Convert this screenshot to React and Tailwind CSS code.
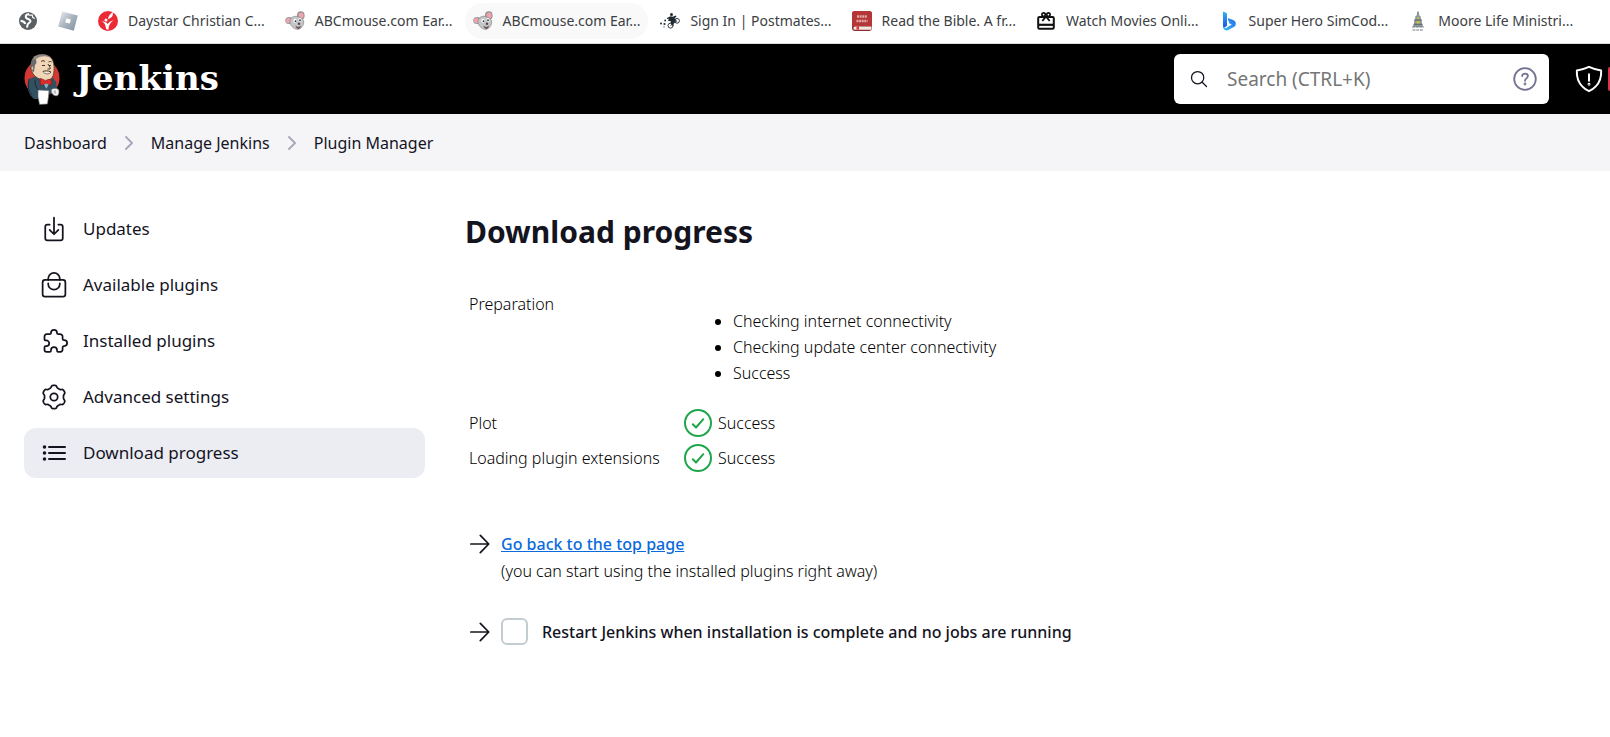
import React from "react";
import { IoSearchOutline, IoDownloadOutline } from "react-icons/io5";

function GlobeIcon() {
  return (
    <svg viewBox="0 0 20 20" className="size-5 shrink-0" aria-hidden="true">
      <circle cx="10" cy="10" r="9" fill="#5a5f64" />
      <path d="M11 3C8.500 3.200 7.600 4.500 7.800 6c.3 2.600 4.400 1.500 4.700 4 .1 1.800-2.600 1.800-3.200 4.600l-.2 2" fill="none" stroke="#fff" strokeWidth="2" />
      <path d="M2.600 9.800c2 .2 4.200.8 4.600 3.200" fill="none" stroke="#fff" strokeWidth="2.200" />
      <path d="M10.500 4.200h3.700l.6 2.300 2 1" fill="none" stroke="#fff" strokeWidth="1.200" />
    </svg>
  );
}

function BlockIcon() {
  return (
    <svg viewBox="0 0 20 20" className="size-5 shrink-0" aria-hidden="true">
      <defs>
        <linearGradient id="block" x1="0" y1="0" x2="1" y2="1">
          <stop offset="0" stopColor="#eef0f2" />
          <stop offset=".5" stopColor="#a9b4bf" />
          <stop offset="1" stopColor="#7f8fa0" />
        </linearGradient>
      </defs>
      <path d="M4.200.4 19.800 4.600 15.800 19.800.2 15.600Z" fill="url(#block)" />
      <path d="M8.300 7.200 12.800 8.400 11.700 12.600 7.300 11.500Z" fill="#fff" />
    </svg>
  );
}

function DaystarIcon() {
  return (
    <svg viewBox="0 0 20 20" className="size-5 shrink-0" aria-hidden="true">
      <circle cx="10" cy="10" r="10" fill="#ec2a35" />
      <path d="M3.500 10.500c2.600.6 4.200 3.200 4.600 7.500l2.400 1c.2-4.400 1.500-7.600 5.500-9.800-2.600.3-4.800 1.500-6.300 3.900-1.200-2-3.300-3-6.200-2.600Z" fill="#fff" />
      <circle cx="8" cy="9" r="1.500" fill="#fff" />
      <path d="M10 8c.3-3 2.500-5.800 5.700-7.200-.8 1.300-1 2-.8 3.200C14 6 12.500 7.500 10 8Z" fill="#fff" />
    </svg>
  );
}

function MouseIcon() {
  return (
    <svg viewBox="0 0 20 20" className="size-5 shrink-0" aria-hidden="true">
      <ellipse cx="4.200" cy="9.500" rx="4" ry="3.600" fill="#9a9a9c" />
      <ellipse cx="3.700" cy="9.500" rx="2.800" ry="2.600" fill="#f0a3ad" />
      <ellipse cx="15.800" cy="4.600" rx="3.800" ry="4.300" fill="#8f8f92" />
      <ellipse cx="16" cy="4.600" rx="2.600" ry="3.200" fill="#f0a3ad" />
      <path d="M5 10c.5-3.500 4-5.500 7.500-4.500 3 .9 5.500 2.500 6.200 4.500.4 3-1.200 6-3.700 7.700-2.300 1.300-5 .6-7-1.200C5.800 14.800 4.600 12.500 5 10Z" fill="#c4c5c8" stroke="#77787b" strokeWidth=".6" />
      <ellipse cx="10" cy="9.800" rx="1.700" ry="2" fill="#fff" />
      <ellipse cx="15" cy="8.800" rx="1.500" ry="1.900" fill="#fff" />
      <circle cx="10.500" cy="10.200" r=".9" fill="#333" />
      <circle cx="15" cy="9.200" r=".9" fill="#333" />
      <circle cx="14" cy="12.700" r="1.200" fill="#5b4547" />
      <path d="M10.500 14.800c1.800 1.600 4 1.400 5.500-.2-.2 2-1.200 3-2.700 3.300-1.500-.2-2.500-1.400-2.800-3.100Z" fill="#6d4c50" />
    </svg>
  );
}

function CourierIcon() {
  return (
    <svg viewBox="0 0 20 20" className="size-5 shrink-0" aria-hidden="true" fill="#1f2a30">
      <circle cx="1" cy="12.500" r="1" />
      <circle cx="5.200" cy="9.500" r=".9" />
      <circle cx="4.500" cy="13" r="1.100" />
      <circle cx="4" cy="15.800" r=".6" />
      <circle cx="11.500" cy="3.400" r="1.500" />
      <path d="M7 7 10.500 5.200l2.500.6L15.500 4.500l1 .8L14.500 7.500l2 1.500-1 1-2.500 2.500 1 2-1 .6-2.500-2.500.5-2.300L8 10l1-2.200-2 .2Z" />
      <circle cx="10.500" cy="14.600" r="2.500" fill="none" stroke="#1f2a30" strokeWidth=".9" />
      <circle cx="17" cy="9.800" r="2.400" fill="none" stroke="#1f2a30" strokeWidth=".9" />
      <path d="m10.500 14.500 6.500-4.700" stroke="#1f2a30" strokeWidth="1" />
    </svg>
  );
}

function BibleIcon() {
  return (
    <svg viewBox="0 0 20 20" className="size-5 shrink-0" aria-hidden="true">
      <rect width="20" height="20" rx="3" fill="#8d2f30" />
      <path d="M0 3a3 3 0 0 1 3-3h14a3 3 0 0 1 3 3v12H3c-1.500 0-2.500.6-3 1.500Z" fill="#b53637" />
      <path d="M3 15.600h16.500v3.200H3a1.600 1.600 0 0 1 0-3.200Z" fill="#f3e7e2" />
      <path d="M4.500 15.600H7V19l-1.200-.8L4.500 19Z" fill="#e0342f" />
      <path d="M5 5.500h10M4.500 10h11" stroke="#e0a9a5" strokeWidth="2.400" strokeDasharray="2 .6" />
    </svg>
  );
}

function GiftIcon() {
  return (
    <svg viewBox="0 0 20 20" className="size-5 shrink-0" aria-hidden="true" fill="none" stroke="#111" strokeWidth="2">
      <rect x="2.200" y="6" width="15.600" height="11.800" rx="1.200" />
      <path d="M2 13.800h16" strokeWidth="2.200" />
      <circle cx="7.600" cy="3.600" r="1.700" strokeWidth="1.700" />
      <circle cx="12.400" cy="3.600" r="1.700" strokeWidth="1.700" />
      <path d="M10 5.500 6.300 10M10 5.500l3.700 4.500" strokeWidth="1.900" />
    </svg>
  );
}

function BingIcon() {
  return (
    <svg viewBox="0 0 20 20" className="size-5 shrink-0" aria-hidden="true">
      <defs>
        <linearGradient id="bingStem" x1="0" y1="0" x2="0" y2="1">
          <stop offset="0" stopColor="#35b4f3" />
          <stop offset="1" stopColor="#1b4fe0" />
        </linearGradient>
        <linearGradient id="bingBowl" x1="0" y1="1" x2="1" y2="0">
          <stop offset="0" stopColor="#38c6f8" />
          <stop offset="1" stopColor="#2667ea" />
        </linearGradient>
      </defs>
      <path d="M4 .6 7 1.700c.6.200 1 .8 1 1.500v11.500L4.800 17C4.200 16.300 4 15.600 4 15Z" fill="url(#bingStem)" />
      <path d="M4 14.800c.4 2.200 2.200 2.600 4 1.600l4.800-2.900-2.300-1-1.500-4c-.3-1 .3-1.400 1.100-1.100l4 1.700c1.900.8 2.700 2 2.700 3.700 0 1.500-.7 2.500-2 3.300L9.400 19.100C6.300 20.600 3.700 18.300 4 14.800Z" fill="url(#bingBowl)" />
    </svg>
  );
}

function SteepleIcon() {
  return (
    <svg viewBox="0 0 20 20" className="size-5 shrink-0" aria-hidden="true">
      <path d="M9.200.5h1.600l.5 4 1.500 1v3l1 1v3.500l1 1v2H5.200v-2l1-1V9.500l1-1v-3l1.500-1Z" fill="#8a979c" />
      <path d="M9 6h2v2.500H9ZM8.500 10h3.200v3H8.500Z" fill="#c9bd4e" />
      <path d="M6 9h8M5.500 13.200h9" stroke="#46545a" strokeWidth=".8" />
      <path d="M4 16h12M4.500 19h11" stroke="#777d80" strokeWidth="1.200" strokeDasharray="3 .7" />
    </svg>
  );
}

const BOOKMARKS = [
  { id: "web", name: "Web", Icon: GlobeIcon },
  { id: "blocks", name: "Games", Icon: BlockIcon },
  { id: "daystar", label: "Daystar Christian C...", Icon: DaystarIcon },
  { id: "abc1", label: "ABCmouse.com Ear...", Icon: MouseIcon },
  { id: "abc2", label: "ABCmouse.com Ear...", Icon: MouseIcon, hovered: true },
  { id: "postmates", label: "Sign In | Postmates...", Icon: CourierIcon },
  { id: "bible", label: "Read the Bible. A fr...", Icon: BibleIcon },
  { id: "movies", label: "Watch Movies Onli...", Icon: GiftIcon },
  { id: "simcode", label: "Super Hero SimCod...", Icon: BingIcon },
  { id: "moore", label: "Moore Life Ministri...", Icon: SteepleIcon },
];

function BookmarkBar() {
  return (
    <nav aria-label="Bookmarks" className="flex h-11 items-center gap-1 overflow-hidden border-b border-[#dadce0] bg-white px-2.5 pb-0.5 font-['Noto_Sans',sans-serif] text-sm text-[#3c4043]">
      {BOOKMARKS.map(({ id, name, label, Icon, hovered }) => (
        <a
          key={id}
          href="#"
          aria-label={label ? undefined : name}
          className={
            "flex h-9 shrink-0 items-center gap-2.5 whitespace-nowrap rounded-full px-2 " +
            (hovered ? "bg-[#f9f9fa]" : "")
          }
        >
          <Icon />
          {label && <span>{label}</span>}
        </a>
      ))}
    </nav>
  );
}

function JenkinsMark() {
  return (
    <svg viewBox="0 0 36 52" className="h-[52px] w-9 shrink-0" aria-hidden="true">
      <ellipse cx="18" cy="25" rx="17.500" ry="18" fill="#d33833" />
      <path d="M7 43C3 38 3 31 5 26l8-3 14 1c4 2 6 5 5.500 9l1.500 4-3 3-6 1-1 5H10Z" fill="#335061" />
      <path d="M5 26c-1 6-1 12 3 16M11 27c0 5 1 8 4 10" fill="none" stroke="#1d2b36" strokeWidth="1" />
      <path d="M9 5c4-5 15-5 19 1 3 5 2.500 14 .5 18-1.500 3-6 4-10 3C11 25 7 20 7 14Z" fill="#f0d6b7" stroke="#49372b" strokeWidth=".8" />
      <path d="M10 5C6 7 6 14 7.500 18l2.500 1 1-7 1.500-2-.5-4Z" fill="#6d6b6d" />
      <path d="M8 7c5-7 15-7 19-2-5-2.500-10-2.500-14 .5Z" fill="#8b8788" />
      <path d="M8.500 13c-2-.5-2 4 .8 4.500" fill="#f0d6b7" stroke="#49372b" strokeWidth=".6" />
      <path d="M17 8.500c1-1 3-1 4 0M24.500 9c1-.8 2-.7 3 0M18 12.500h3M25 12.500h2M24 11c1 2.500 3 3.500 2 5h-2.500M19 18.500c2-1 5-1 8 .5-2 2.500-6 2.500-8-.5Z" fill="none" stroke="#49372b" strokeWidth="1" />
      <path d="M20 19.500c2 .8 4 .8 6 0" fill="none" stroke="#fff" strokeWidth=".8" />
      <path d="m18 27 4 8 5-7Z" fill="#b8d0dc" />
      <path d="M16 25.500c2 0 4 1.500 5.500 2.500 2-1.500 4-2 5.500-1.500l.5 5.500c-2 0-4-1-5.500-2-1.500 1.300-3 2.200-5.500 2Z" fill="#e02b28" stroke="#7f1a18" strokeWidth=".6" />
      <path d="m20.500 31 2 5 2-5Z" fill="#81b0c4" />
      <path d="m14 37 11 .5-.5 6-1 7.500-8 .5-1.500-7.500Z" fill="#fff" stroke="#5a6268" strokeWidth=".6" />
      <path d="M27.500 36.500c2-1.500 5-1.500 7 0 .8 2 .5 4.500-.8 6-2 .8-4 0-5.200-1.500-1-1-1.500-3-1-4.500Z" fill="#f2f2f2" stroke="#777" strokeWidth=".6" />
      <path d="M29.500 39h2.500M31 37v4" stroke="#999" strokeWidth=".7" />
    </svg>
  );
}

function ShieldIcon() {
  return (
    <svg viewBox="0 0 512 512" className="size-[30px]" fill="none" stroke="currentColor" strokeWidth="34" strokeLinecap="round" strokeLinejoin="round" aria-hidden="true">
      <path d="M463.100 112.370C373.680 96.330 336.710 84.450 256 48c-80.710 36.450-117.680 48.330-207.100 64.370C32.700 369.130 240.580 457.790 256 464c15.420-6.210 223.300-94.870 207.100-351.630Z" />
      <path d="M256 176v108" />
      <circle cx="256" cy="346" r="8" />
    </svg>
  );
}

function HelpIcon() {
  return (
    <svg viewBox="0 0 24 24" className="size-6" fill="none" stroke="currentColor" strokeWidth="1.800" strokeLinecap="round" strokeLinejoin="round" aria-hidden="true">
      <circle cx="12" cy="12" r="10.800" />
      <path d="M9.200 9C9.200 7.400 10.400 6.700 12 6.700s2.900.9 2.900 2.400c0 2.200-2.900 2.300-2.900 4.700" />
      <circle cx="12" cy="17" r=".5" />
    </svg>
  );
}

function Header() {
  return (
    <header className="flex h-[70px] items-center overflow-hidden bg-black pl-6 text-white">
      <a href="#" className="flex items-center gap-4">
        <JenkinsMark />
        <span className="pb-0.5 font-['DejaVu_Serif',serif] text-[34px] leading-9 font-bold">Jenkins</span>
      </a>
      <div className="ml-auto flex h-[50px] w-[375px] items-center rounded-md bg-white px-[15px] pr-3">
        <label htmlFor="search" className="text-[#14141f]" aria-label="Search">
          <IoSearchOutline className="size-5" />
        </label>
        <input
          id="search"
          type="search"
          placeholder="Search (CTRL+K)"
          className="ml-[18px] min-w-0 flex-1 bg-transparent text-[19px] text-[#14141f] outline-none placeholder:text-[#757575]"
        />
        <button type="button" aria-label="Help" className="text-[#737391]">
          <HelpIcon />
        </button>
      </div>
      <button type="button" aria-label="Security warnings" className="ml-[25px] flex items-center gap-1">
        <ShieldIcon />
        <span className="h-6 w-0.5 rounded-l bg-[#d9364a]" />
      </button>
    </header>
  );
}

function Breadcrumbs() {
  const crumbs = ["Dashboard", "Manage Jenkins", "Plugin Manager"];
  return (
    <nav aria-label="Breadcrumb" className="bg-[#f5f5f8]">
      <ol className="flex h-[57px] items-center pl-6">
        {crumbs.map((crumb, i) => (
          <li key={crumb} className="flex items-center">
            {i > 0 && (
              <svg viewBox="0 0 8 14" className="mx-[18px] h-3.5 w-2" fill="none" stroke="#a6a6ba" strokeWidth="1.800" strokeLinecap="round" strokeLinejoin="round" aria-hidden="true">
                <path d="m1 1 6 6-6 6" />
              </svg>
            )}
            <a href="#">{crumb}</a>
          </li>
        ))}
      </ol>
    </nav>
  );
}

function BagIcon({ className }) {
  return (
    <svg viewBox="0 0 512 512" className={className} fill="none" stroke="currentColor" strokeWidth="32" strokeLinecap="round" strokeLinejoin="round" aria-hidden="true">
      <rect x="48" y="164" width="416" height="304" rx="44" />
      <path d="M150 160v-18a106 106 0 0 1 212 0v18M150 226v10a106 106 0 0 0 212 0v-10" />
    </svg>
  );
}

function PuzzleIcon({ className }) {
  return (
    <svg viewBox="0 0 28 28" className={className} fill="none" stroke="currentColor" strokeWidth="1.750" strokeLinecap="round" strokeLinejoin="round" aria-hidden="true">
      <path d="M6.600 7.200H9.600q1.400 0 1.400-1.400V5.900a3 3 0 0 1 6 0v-.1q0 1.400 1.400 1.400h1.600a2.600 2.600 0 0 1 2.600 2.600v2q0 1.400 1.400 1.400h.2a2.900 2.900 0 0 1 0 5.800h-.2q-1.400 0-1.400 1.400v2.200a2.200 2.200 0 0 1-2.200 2.200h-2.600q-.8 0-.8-1.200v-.6a3 3 0 0 0-6 0v.6q0 1.200-.8 1.200H6.600a2.100 2.100 0 0 1-2.100-2.100v-2.500q0-1 1-1h.8a2.900 2.900 0 0 0 0-5.800h-.8q-1 0-1-1V9.300a2.100 2.100 0 0 1 2.100-2.100Z" />
    </svg>
  );
}

// Outline of a six-lobed cog centred in a 28-unit box.
const GEAR_OUTLINE = Array.from({ length: 144 }, (_, i) => {
  const a = (i / 144) * Math.PI * 2;
  const r = 10.600 + 1.150 * Math.tanh(2 * Math.cos(6 * a));
  return `${(14 + r * Math.sin(a)).toFixed(2)},${(14 - r * Math.cos(a)).toFixed(2)}`;
}).join(" ");

function GearIcon({ className }) {
  return (
    <svg viewBox="0 0 28 28" className={className} fill="none" stroke="currentColor" strokeWidth="1.750" strokeLinejoin="round" aria-hidden="true">
      <circle cx="14" cy="14" r="3.700" />
      <polygon points={GEAR_OUTLINE} />
    </svg>
  );
}

function ListIcon({ className }) {
  return (
    <svg viewBox="0 0 28 28" className={className} fill="none" stroke="currentColor" strokeWidth="2" strokeLinecap="round" aria-hidden="true">
      <path d="M9 8h16M9 14h16M9 20h16" />
      <path d="M4.500 8h.01M4.500 14h.01M4.500 20h.01" strokeWidth="3.600" />
    </svg>
  );
}

const TASKS = [
  { label: "Updates", Icon: IoDownloadOutline },
  { label: "Available plugins", Icon: BagIcon },
  { label: "Installed plugins", Icon: PuzzleIcon },
  { label: "Advanced settings", Icon: GearIcon },
  { label: "Download progress", Icon: ListIcon, active: true },
];

function SidePanel() {
  return (
    <nav aria-label="Plugin manager" className="flex w-[401px] shrink-0 flex-col gap-1.5">
      {TASKS.map(({ label, Icon, active }) => (
        <a
          key={label}
          href="#"
          aria-current={active ? "page" : undefined}
          className={
            "flex h-[50px] items-center gap-[15px] rounded-xl px-4 text-[17px] " +
            (active ? "bg-[#ecedf3]" : "")
          }
        >
          <Icon className="size-7 shrink-0" />
          {label}
        </a>
      ))}
    </nav>
  );
}

function ArrowIcon() {
  return (
    <svg viewBox="0 0 512 512" className="size-[26px] shrink-0" fill="none" stroke="currentColor" strokeWidth="34" strokeLinecap="round" strokeLinejoin="round" aria-hidden="true">
      <path d="M262 88 428 256 262 424M420 256H76" />
    </svg>
  );
}

function SuccessStatus() {
  return (
    <div className="flex items-center gap-1.5">
      <svg viewBox="0 0 28 28" className="size-7" fill="none" stroke="#1ea64b" strokeWidth="2" strokeLinecap="round" strokeLinejoin="round" aria-hidden="true">
        <circle cx="14" cy="14" r="13" />
        <path d="m8.800 15.200 3.200 3.300 7.300-8.300" />
      </svg>
      Success
    </div>
  );
}

function ProgressTable() {
  return (
    <table className="mt-[37px] font-light text-black">
      <tbody>
        <tr className="align-top">
          <td className="w-[219px] pl-1 leading-[26px]">Preparation</td>
          <td>
            <ul className="mt-[17px] mb-[19px] list-disc pl-[49px] leading-[26px]">
              <li>Checking internet connectivity</li>
              <li>Checking update center connectivity</li>
              <li>Success</li>
            </ul>
          </td>
        </tr>
        {["Plot", "Loading plugin extensions"].map((name) => (
          <tr key={name} className="h-[35px]">
            <td className="pl-1">{name}</td>
            <td><SuccessStatus /></td>
          </tr>
        ))}
      </tbody>
    </table>
  );
}

export default function App() {
  return (
    <div className="min-h-screen bg-white font-['Noto_Sans',sans-serif] text-base text-[#14141f]">
      <BookmarkBar />
      <Header />
      <Breadcrumbs />
      <div className="flex gap-10 px-6 pt-[33px]">
        <SidePanel />
        <main className="min-w-0 flex-1">
          <h1 className="pt-1.5 text-[30px] leading-[44px] font-bold">Download progress</h1>
          <ProgressTable />
          <div className="mt-14 flex gap-2 pl-0.5">
            <ArrowIcon />
            <div className="leading-[27px]">
              <a href="#" className="font-medium text-[#0b6bdc] underline">Go back to the top page</a>
              <p className="font-light text-black">(you can start using the installed plugins right away)</p>
            </div>
          </div>
          <div className="mt-[33px] flex items-center gap-2 pl-0.5">
            <ArrowIcon />
            <input id="restart" type="checkbox" className="size-[27px] shrink-0 appearance-none rounded-md border-2 border-[#c3ccd1] bg-white" />
            <label htmlFor="restart" className="ml-1.5 font-medium">
              Restart Jenkins when installation is complete and no jobs are running
            </label>
          </div>
        </main>
      </div>
    </div>
  );
}
